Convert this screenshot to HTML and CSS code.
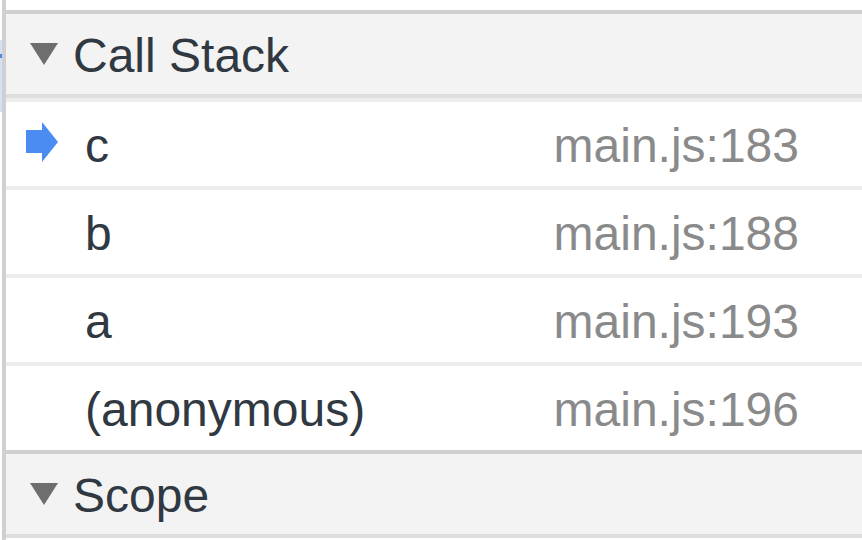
FILE: index.html
```html
<!DOCTYPE html>
<html>
<head>
<meta charset="utf-8">
<link rel="stylesheet" href="styles.css">
</head>
<body>
<div class="edge"><span class="edge-mark"></span></div>
<div class="panel">
  <div class="gap"></div>
  <div class="section-header">
    <svg class="tri" width="28" height="24" viewBox="0 0 28 24"><polygon points="0,1 28,1 14,23" fill="#6e6e6e"/></svg>
    <span class="title">Call Stack</span>
  </div>
  <div class="frames">
    <div class="row">
      <svg class="icon" width="32" height="40" viewBox="0 0 32 40"><polygon points="0,8 16,8 16,0 32,20 16,40 16,31 0,31" fill="#4b8cf2"/></svg>
      <span class="name">c</span>
      <span class="loc">main.js:183</span>
    </div>
    <div class="row">
      <span class="icon"></span>
      <span class="name">b</span>
      <span class="loc">main.js:188</span>
    </div>
    <div class="row">
      <span class="icon"></span>
      <span class="name">a</span>
      <span class="loc">main.js:193</span>
    </div>
    <div class="row">
      <span class="icon"></span>
      <span class="name">(anonymous)</span>
      <span class="loc">main.js:196</span>
    </div>
  </div>
  <div class="section-header scope">
    <svg class="tri" width="28" height="24" viewBox="0 0 28 24"><polygon points="0,1 28,1 14,23" fill="#6e6e6e"/></svg>
    <span class="title">Scope</span>
  </div>
</div>
</body>
</html>
```
FILE: styles.css
```css
html, body {
  margin: 0;
  padding: 0;
  background: #ffffff;
  width: 862px;
  height: 540px;
  overflow: hidden;
}

body {
  position: relative;
  font-family: "Liberation Sans", Arial, Helvetica, sans-serif;
  font-size: 48px;
  color: #303942;
}

.edge {
  position: absolute;
  left: 0;
  top: 40px;
  width: 2px;
  height: 72px;
  background: #d6dff3;
}

.edge-mark {
  position: absolute;
  left: 0;
  top: 14px;
  width: 2px;
  height: 4px;
  background: #4a86ec;
}

.panel {
  margin-left: 2px;
  border-left: 4px solid #d0d0d0;
  height: 540px;
  box-sizing: border-box;
}

.gap {
  height: 10px;
}

.section-header {
  display: flex;
  align-items: center;
  height: 80px;
  box-sizing: content-box;
  background: #f3f3f3;
  border-top: 4px solid #d0d0d0;
  border-bottom: 4px solid #dedede;
  padding-left: 24px;
}

.section-header .tri {
  flex: none;
  margin-right: 15px;
}

.title {
  padding-top: 3px;
  white-space: nowrap;
}

.row {
  display: flex;
  align-items: center;
  height: 84px;
  border-top: 4px solid #ededed;
  padding-left: 20px;
  padding-right: 63px;
}

.icon {
  flex: none;
  width: 32px;
  height: 40px;
  margin-right: 27px;
  margin-top: -4px;
}

.name {
  flex: 1;
  padding-top: 3px;
  white-space: nowrap;
}

.loc {
  padding-top: 3px;
  color: #8a8a8a;
  white-space: nowrap;
}
```
